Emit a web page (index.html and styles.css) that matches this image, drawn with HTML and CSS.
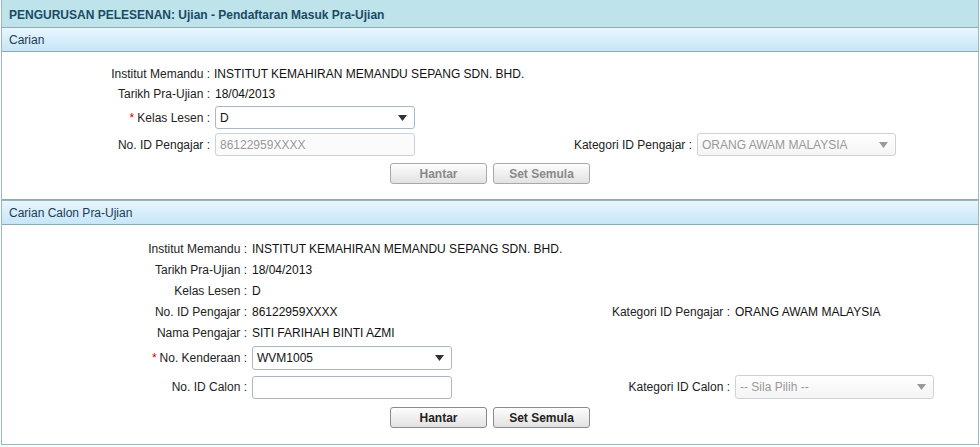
FILE: index.html
```html
<!DOCTYPE html>
<html lang="en">
<head>
    <meta charset="UTF-8">
    <title>Pendaftaran Masuk Pra-Ujian</title>
    <link rel="stylesheet" href="styles.css">
</head>
<body>
    <div class="panel">
        <div class="title-bar">PENGURUSAN PELESENAN: Ujian - Pendaftaran Masuk Pra-Ujian</div>

        <div class="section">
            <div class="section-head">Carian</div>
            <div class="form form-search">
                <div class="lbl">Institut Memandu :</div>
                <div class="val">INSTITUT KEMAHIRAN MEMANDU SEPANG SDN. BHD.</div>
                <div class="lbl"></div><div class="val"></div>

                <div class="lbl">Tarikh Pra-Ujian :</div>
                <div class="val">18/04/2013</div>
                <div class="lbl"></div><div class="val"></div>

                <div class="lbl ctl-row"><span class="req">*</span> Kelas Lesen :</div>
                <div class="val ctl-row">
                    <div class="select">
                        <span>D</span>
                        <svg width="9" height="6" viewBox="0 0 9 6"><path d="M0 0H9L4.5 6Z" fill="#333"/></svg>
                    </div>
                </div>
                <div class="lbl ctl-row"></div><div class="val ctl-row"></div>

                <div class="lbl ctl-row">No. ID Pengajar :</div>
                <div class="val ctl-row">
                    <div class="input disabled">86122959XXXX</div>
                </div>
                <div class="lbl ctl-row">Kategori ID Pengajar :</div>
                <div class="val ctl-row">
                    <div class="select disabled">
                        <span>ORANG AWAM MALAYSIA</span>
                        <svg width="9" height="6" viewBox="0 0 9 6"><path d="M0 0H9L4.5 6Z" fill="#999"/></svg>
                    </div>
                </div>

                <div class="buttons">
                    <button class="btn btn-off">Hantar</button>
                    <button class="btn btn-off">Set Semula</button>
                </div>
            </div>
        </div>

        <div class="section">
            <div class="section-head">Carian Calon Pra-Ujian</div>
            <div class="form form-calon">
                <div class="lbl">Institut Memandu :</div>
                <div class="val">INSTITUT KEMAHIRAN MEMANDU SEPANG SDN. BHD.</div>
                <div class="lbl"></div><div class="val"></div>

                <div class="lbl">Tarikh Pra-Ujian :</div>
                <div class="val">18/04/2013</div>
                <div class="lbl"></div><div class="val"></div>

                <div class="lbl">Kelas Lesen :</div>
                <div class="val">D</div>
                <div class="lbl"></div><div class="val"></div>

                <div class="lbl">No. ID Pengajar :</div>
                <div class="val">86122959XXXX</div>
                <div class="lbl">Kategori ID Pengajar :</div>
                <div class="val">ORANG AWAM MALAYSIA</div>

                <div class="lbl">Nama Pengajar :</div>
                <div class="val">SITI FARIHAH BINTI AZMI</div>
                <div class="lbl"></div><div class="val"></div>

                <div class="lbl ctl-row sel-row"><span class="req">*</span> No. Kenderaan :</div>
                <div class="val ctl-row sel-row">
                    <div class="select">
                        <span>WVM1005</span>
                        <svg width="9" height="6" viewBox="0 0 9 6"><path d="M0 0H9L4.5 6Z" fill="#333"/></svg>
                    </div>
                </div>
                <div class="lbl ctl-row sel-row"></div><div class="val ctl-row sel-row"></div>

                <div class="lbl ctl-row">No. ID Calon :</div>
                <div class="val ctl-row">
                    <div class="input"></div>
                </div>
                <div class="lbl ctl-row">Kategori ID Calon :</div>
                <div class="val ctl-row">
                    <div class="select disabled">
                        <span>-- Sila Pilih --</span>
                        <svg width="9" height="6" viewBox="0 0 9 6"><path d="M0 0H9L4.5 6Z" fill="#999"/></svg>
                    </div>
                </div>

                <div class="buttons">
                    <button class="btn">Hantar</button>
                    <button class="btn">Set Semula</button>
                </div>
            </div>
        </div>
    </div>
</body>
</html>
```

FILE: styles.css
```css
body {
    margin: 0;
    background-color: #ffffff;
    font-family: "Liberation Sans", Arial, sans-serif;
    font-size: 12px;
    color: #222;
}

.panel {
    width: 976px;
    margin-left: 1px;
    border-left: 1px solid #9cb6bd;
    border-right: 1px solid #9cb6bd;
    border-bottom: 1px solid #9cb6bd;
}

.title-bar {
    height: 27px;
    line-height: 31px;
    padding-left: 7px;
    background-color: #bee3ea;
    border-bottom: 1px solid #8eacb3;
    color: #1b4a66;
    font-weight: bold;
}

.section + .section {
    border-top: 1px solid #8eacb3;
}

.section-head {
    height: 23px;
    line-height: 24px;
    padding-left: 7px;
    background: linear-gradient(#e8f6fe, #c6e6f8);
    border-bottom: 1px solid #8eacb3;
    color: #1f3a55;
}

.section + .section .section-head {
    border-top: 1px solid #9cb3b9;
}

.form {
    display: grid;
    align-items: center;
}

.form-search {
    grid-template-columns: 208px 354px 128px 1fr;
    padding: 12px 0 15px;
}

.form-calon {
    grid-template-columns: 245px 353px 130px 1fr;
    padding: 13px 0 16px;
}

.lbl, .val {
    height: 20px;
    display: flex;
    align-items: center;
    white-space: nowrap;
}

.form-calon .lbl, .form-calon .val {
    height: 21px;
}

.lbl {
    justify-content: flex-end;
    color: #222;
}

.val {
    padding-left: 5px;
    color: #111;
}

.form-search .val {
    padding-left: 4px;
}

.form-search .lbl + .val + .lbl + .val {
    padding-left: 5px;
}

.form .ctl-row {
    height: 27px;
}

.form-calon .ctl-row {
    height: 30px;
}

.form-calon .sel-row {
    height: 29px;
}

.req {
    color: #d40000;
    margin-right: 3px;
}

.select, .input {
    box-sizing: border-box;
    width: 200px;
    height: 23px;
    border: 1px solid #a9b8c4;
    border-radius: 3px;
    background: #fff;
    display: flex;
    align-items: center;
    justify-content: space-between;
    padding: 0 7px 0 4px;
    color: #111;
}

.form-calon .select {
    height: 24px;
}

.select svg {
    flex-shrink: 0;
}

.disabled {
    color: #999;
    border-color: #ccd3d8;
    background: #fbfbfb;
}

.select.disabled {
    width: 199px;
    background: linear-gradient(#ffffff, #f4f4f4);
}

.buttons {
    grid-column: 1 / -1;
    display: flex;
    justify-content: center;
    gap: 6px;
    margin-top: 5px;
}

.btn {
    width: 97px;
    height: 21px;
    border: 1px solid #8a8a8a;
    border-radius: 3px;
    background: linear-gradient(#fdfdfd, #e2e2e2);
    font-family: "Liberation Sans", Arial, sans-serif;
    font-size: 12px;
    font-weight: bold;
    color: #222;
    padding: 0;
}

.btn-off {
    color: #8a8a8a;
    border-color: #a8a8a8;
}
```
